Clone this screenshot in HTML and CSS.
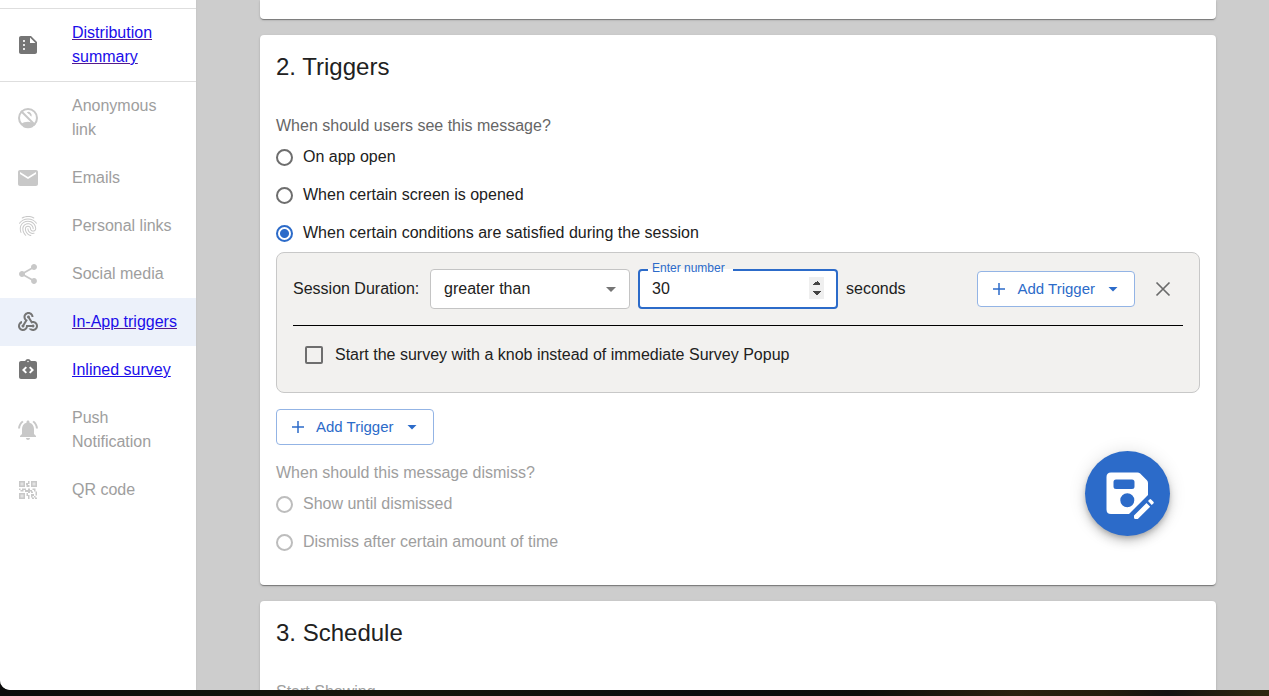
FILE: index.html
```html
<!DOCTYPE html>
<html lang="en">
<head>
<meta charset="utf-8">
<title>In-App triggers</title>
<link rel="stylesheet" href="styles.css">
</head>
<body>
<div class="window">
  <nav class="sidebar" aria-label="Distribution">
    <ul class="nav nav-summary">
      <li class="nav-item">
        <svg class="icon" viewBox="0 0 24 24"><path d="M15 3H5c-1.1 0-1.99.9-1.99 2L3 19c0 1.1.89 2 1.99 2H19c1.1 0 2-.9 2-2V9l-6-6zM8 17c-.55 0-1-.45-1-1s.45-1 1-1 1 .45 1 1-.45 1-1 1zm0-4c-.55 0-1-.45-1-1s.45-1 1-1 1 .45 1 1-.45 1-1 1zm0-4c-.55 0-1-.45-1-1s.45-1 1-1 1 .45 1 1-.45 1-1 1zm6 1V4.5l5.500 5.500H14z"/></svg>
        <a class="visited" href="#summary">Distribution summary</a>
      </li>
    </ul>
    <ul class="nav">
      <li class="nav-item disabled">
        <svg class="icon" viewBox="0 0 24 24"><circle cx="12" cy="12" r="11" fill="none" stroke="none"/><circle cx="12" cy="12" r="9" fill="none" stroke="currentColor" stroke-width="2"/><path d="M5 18C7 16.500 9.400 15.700 12 15.700c1.100 0 2.200.2 3.300.5L19 18.500l-2.500 2.700a10 10 0 0 1-9 0z"/><path d="M5 5l14 14" fill="none" stroke="currentColor" stroke-width="2"/><path d="M10.800 6.200a3.500 3.500 0 0 1 4.600 4.600l-1.500-1.500a1.600 1.600 0 0 0-1.600-1.600z"/></svg>
        <span>Anonymous link</span>
      </li>
      <li class="nav-item disabled">
        <svg class="icon" viewBox="0 0 24 24"><path d="M20 4H4c-1.100 0-1.990.9-1.990 2L2 18c0 1.100.9 2 2 2h16c1.100 0 2-.9 2-2V6c0-1.100-.9-2-2-2zm0 4l-8 5-8-5V6l8 5 8-5v2z"/></svg>
        <span>Emails</span>
      </li>
      <li class="nav-item disabled">
        <svg class="icon" viewBox="0 0 24 24"><path d="M17.81 4.47c-.08 0-.16-.02-.23-.06C15.66 3.42 14 3 12.01 3c-1.98 0-3.86.47-5.57 1.41-.24.13-.54.04-.68-.2-.13-.24-.04-.55.2-.68C7.82 2.52 9.86 2 12.01 2c2.13 0 3.99.47 6.03 1.52.25.13.34.43.21.67-.09.18-.26.28-.44.28zM3.500 9.720c-.1 0-.2-.03-.29-.09-.23-.16-.28-.47-.12-.7.99-1.400 2.250-2.500 3.750-3.270C9.980 4.040 14 4.030 17.150 5.650c1.500.77 2.760 1.860 3.750 3.250.16.22.11.54-.12.7-.23.16-.54.11-.7-.12-.9-1.260-2.040-2.250-3.390-2.940-2.870-1.470-6.540-1.470-9.400.01-1.360.7-2.500 1.700-3.400 2.960-.08.14-.23.21-.39.21zm6.250 12.070c-.13 0-.26-.05-.35-.15-.87-.87-1.340-1.430-2.010-2.640-.69-1.230-1.050-2.730-1.050-4.340 0-2.970 2.540-5.390 5.660-5.390s5.660 2.420 5.660 5.390c0 .28-.22.5-.5.5s-.5-.22-.5-.5c0-2.420-2.090-4.390-4.660-4.390-2.570 0-4.660 1.970-4.660 4.390 0 1.440.32 2.770.93 3.850.64 1.150 1.080 1.640 1.850 2.420.19.2.19.51 0 .71-.11.1-.24.15-.37.15zm7.170-1.850c-1.190 0-2.240-.3-3.100-.89-1.490-1.010-2.380-2.650-2.380-4.390 0-.28.22-.5.5-.5s.5.22.5.5c0 1.410.72 2.740 1.940 3.560.71.48 1.540.71 2.540.71.24 0 .64-.03 1.040-.1.27-.05.53.13.58.41.05.27-.13.53-.41.58-.57.11-1.070.12-1.210.12zM14.910 22c-.04 0-.09-.01-.13-.02-1.590-.44-2.630-1.030-3.720-2.100-1.400-1.390-2.170-3.240-2.170-5.220 0-1.620 1.380-2.940 3.080-2.940 1.700 0 3.080 1.320 3.080 2.940 0 1.070.93 1.940 2.080 1.940s2.080-.87 2.080-1.940c0-3.770-3.250-6.830-7.250-6.830-2.840 0-5.440 1.580-6.610 4.030-.39.81-.59 1.760-.59 2.800 0 .78.07 2.010.67 3.610.1.26-.03.55-.29.64-.26.1-.55-.04-.64-.29-.49-1.310-.73-2.610-.73-3.960 0-1.200.23-2.290.68-3.240 1.330-2.790 4.280-4.600 7.510-4.600 4.550 0 8.250 3.510 8.250 7.830 0 1.620-1.380 2.940-3.080 2.940s-3.080-1.320-3.080-2.940c0-1.070-.93-1.940-2.080-1.940s-2.080.87-2.080 1.940c0 1.710.66 3.310 1.870 4.510.95.94 1.860 1.460 3.270 1.850.27.07.42.35.35.61-.05.23-.26.38-.47.38z"/></svg>
        <span>Personal links</span>
      </li>
      <li class="nav-item disabled">
        <svg class="icon" viewBox="0 0 24 24"><path d="M18 16.080c-.76 0-1.440.3-1.960.77L8.910 12.700c.05-.23.09-.46.09-.7s-.04-.47-.09-.7l7.050-4.110c.54.5 1.250.81 2.040.81 1.660 0 3-1.340 3-3s-1.340-3-3-3-3 1.340-3 3c0 .24.04.47.09.7L8.040 9.810C7.500 9.310 6.790 9 6 9c-1.660 0-3 1.340-3 3s1.340 3 3 3c.79 0 1.500-.31 2.040-.81l7.120 4.160c-.05.21-.08.43-.08.65 0 1.610 1.310 2.920 2.920 2.920s2.920-1.310 2.920-2.920-1.310-2.920-2.920-2.920z"/></svg>
        <span>Social media</span>
      </li>
      <li class="nav-item selected">
        <svg class="icon" viewBox="0 0 24 24"><path d="M10 15h5.880c.27-.31.67-.5 1.120-.5.83 0 1.500.67 1.500 1.500s-.67 1.500-1.500 1.500c-.44 0-.84-.19-1.120-.5H11.900c-.46 2.280-2.480 4-4.900 4-2.760 0-5-2.240-5-5 0-2.420 1.720-4.440 4-4.900v2.070c-1.160.41-2 1.530-2 2.830 0 1.650 1.350 3 3 3s3-1.350 3-3v-1zm2.500-11c1.650 0 3 1.350 3 3h2c0-2.760-2.240-5-5-5s-5 2.240-5 5c0 1.430.6 2.710 1.550 3.620l-2.350 3.900c-.68.14-1.200.75-1.200 1.480 0 .83.67 1.500 1.500 1.500s1.500-.67 1.500-1.500c0-.16-.02-.31-.07-.45l3.380-5.630C10.490 9.610 9.500 8.420 9.500 7c0-1.650 1.350-3 3-3zm4.500 9c-.64 0-1.230.2-1.720.54l-3.050-5.070C11.530 8.350 11 7.740 11 7c0-.83.67-1.500 1.500-1.500S14 6.170 14 7c0 .15-.02.29-.06.43l2.190 3.650c.28-.05.57-.08.87-.08 2.760 0 5 2.240 5 5s-2.240 5-5 5c-1.850 0-3.470-1.010-4.330-2.500h2.670c.48.32 1.050.5 1.660.5 1.650 0 3-1.350 3-3s-1.350-3-3-3z"/></svg>
        <a class="visited" href="#in-app" aria-current="page">In-App triggers</a>
      </li>
      <li class="nav-item">
        <svg class="icon" viewBox="0 0 24 24"><path fill-rule="evenodd" d="M19 3h-4.180C14.400 1.840 13.300 1 12 1s-2.400.84-2.820 2H5c-1.100 0-2 .9-2 2v14c0 1.100.9 2 2 2h14c1.100 0 2-.9 2-2V5c0-1.100-.9-2-2-2zM11 14.170l-1.410 1.420L6 12l3.590-3.590L11 9.830 8.830 12 11 14.170zm1-9.920a.75.75 0 1 1 0-1.500.75.75 0 0 1 0 1.500zm2.410 11.340L13 14.170 15.170 12 13 9.830l1.410-1.420L18 12l-3.590 3.590z"/></svg>
        <a href="#inlined">Inlined survey</a>
      </li>
      <li class="nav-item disabled">
        <svg class="icon" viewBox="0 0 24 24"><path d="M7.580 4.080L6.150 2.650C3.750 4.480 2.170 7.300 2.030 10.500h2c.15-2.650 1.510-4.970 3.550-6.420zm12.390 6.420h2c-.15-3.200-1.730-6.020-4.120-7.850l-1.420 1.430c2.020 1.450 3.390 3.770 3.540 6.420zM18 11c0-3.070-1.640-5.640-4.500-6.320V4c0-.83-.67-1.500-1.500-1.500s-1.500.67-1.500 1.500v.68C7.630 5.360 6 7.920 6 11v5l-2 2v1h16v-1l-2-2v-5zm-6 11c1.100 0 2-.9 2-2h-4c0 1.100.9 2 2 2z"/></svg>
        <span>Push Notification</span>
      </li>
      <li class="nav-item disabled">
        <svg class="icon" viewBox="0 0 24 24"><g fill="currentColor" fill-opacity=".5" stroke="currentColor" stroke-width="1.500"><path d="M3.750 3.750h4.500v4.500h-4.500zM15.750 3.750h4.500v4.500h-4.500zM3.750 15.750h4.500v4.500h-4.500z"/></g><path d="M12 3h1.500v3H12zM10 5h2v2h-2zM10.500 7H13.500V9h-3zM3 10.500h1.500V12H3zM4.500 12H6v1.500H4.500zM6 10.500h4V12H7.500v1.500H6zM9 12h3v2H9zM12 10.500h2V12h2v1.500h-2V15h-2zM16.500 10.500h3V12h-3zM18 12h1.500v1.500H18zM19.500 13.500H21v4h-1.500zM15 13.500h2V15h-2zM10.500 15H12v3h-1.500zM12 17h1.500v4H12zM15 16h3v2h-1.500v1.500H15zM16 19.500h2V21h-2zM18 18h1.500v1.500H21V21h-2v-1.500h-1z"/></svg>
        <span>QR code</span>
      </li>
    </ul>
  </nav>

  <main class="content">
    <section class="card card-previous" aria-label="Previous step"></section>

    <section class="card">
      <h2>2. Triggers</h2>
      <fieldset class="group">
        <legend>When should users see this message?</legend>
        <label class="choice"><input type="radio" name="trigger"><span>On app open</span></label>
        <label class="choice"><input type="radio" name="trigger"><span>When certain screen is opened</span></label>
        <label class="choice"><input type="radio" name="trigger" checked><span>When certain conditions are satisfied during the session</span></label>
      </fieldset>

      <div class="conditions">
        <div class="condition-row">
          <label class="condition-name" for="comparison">Session Duration:</label>
          <div class="field">
            <select id="comparison"><option>greater than</option><option>less than</option></select>
            <svg class="icon caret" viewBox="0 0 24 24"><path d="M7 10l5 5 5-5z"/></svg>
          </div>
          <div class="field field-active">
            <label class="float-label" for="seconds">Enter number</label>
            <input id="seconds" type="number" value="30">
          </div>
          <span>seconds</span>
          <div class="row-actions">
            <button class="button" type="button">
              <svg viewBox="0 0 20 20"><path d="M4 10h12M10 4v12" fill="none" stroke="currentColor" stroke-width="1.500"/></svg>
              <span>Add Trigger</span>
              <svg viewBox="0 0 20 20"><path d="M5.500 8h9L10 12.500z"/></svg>
            </button>
            <button class="icon-button" type="button" aria-label="Remove trigger">
              <svg class="icon" viewBox="0 0 24 24"><path d="M5.500 5.500l13 13M18.500 5.500l-13 13" fill="none" stroke="currentColor" stroke-width="1.700"/></svg>
            </button>
          </div>
        </div>
        <hr>
        <label class="choice knob"><input type="checkbox"><span>Start the survey with a knob instead of immediate Survey Popup</span></label>
      </div>

      <button class="button" type="button">
        <svg viewBox="0 0 20 20"><path d="M4 10h12M10 4v12" fill="none" stroke="currentColor" stroke-width="1.500"/></svg>
        <span>Add Trigger</span>
        <svg viewBox="0 0 20 20"><path d="M5.500 8h9L10 12.500z"/></svg>
      </button>

      <fieldset class="group group-dismiss" disabled>
        <legend>When should this message dismiss?</legend>
        <label class="choice"><input type="radio" name="dismiss"><span>Show until dismissed</span></label>
        <label class="choice"><input type="radio" name="dismiss"><span>Dismiss after certain amount of time</span></label>
      </fieldset>
    </section>

    <section class="card">
      <h2>3. Schedule</h2>
      <fieldset class="group" disabled>
        <legend>Start Showing</legend>
      </fieldset>
    </section>
  </main>

  <button class="fab" type="button" aria-label="Save changes">
    <svg viewBox="0 0 85 85"><path fill-rule="evenodd" d="M26 21.500H52.500Q54 21.500 55.200 22.600L61.900 29.300Q63 30.400 63 32V44L44 63H26Q21.500 63 21.500 58.500V26Q21.500 21.500 26 21.500zM31 28.500Q28.500 28.500 28.500 31V35.500Q28.500 38 31 38H47Q49.500 38 49.500 35.500V31Q49.500 28.500 47 28.500zM42.300 42.300a7 7 0 1 0 0 14 7 7 0 0 0 0-14z"/><path d="M49 64.500L61.500 52 65.200 55.700 52.800 68H50.500Q49 68 49 66.500zM63 50l1.500-1.500q.8-.8 1.600 0l2.300 2.300q.8.8 0 1.600L66.700 54z"/></svg>
  </button>
</div>
<div class="desktop"></div>
</body>
</html>
```
FILE: styles.css
```css
* {
  box-sizing: border-box;
}

body {
  margin: 0;
  height: 100vh;
  display: flex;
  flex-direction: column;
  overflow: hidden;
  background: #0b0c0b;
  color: #212121;
  font-family: "Liberation Sans", Arial, sans-serif;
  font-size: 16px;
  line-height: 24px;
}

input,
select,
button {
  margin: 0;
  font: inherit;
  color: inherit;
}

.window {
  position: relative;
  flex: 1;
  min-height: 0;
  display: flex;
  overflow: hidden;
  border-bottom-left-radius: 10px;
  background: #cdcdcd;
}

.desktop {
  height: 6px;
  background: linear-gradient(90deg, #0b0c0b 0%, #15170b 30%, #0b0c0e 55%, #0d0e0b 68%, #2b210f 80%, #241c0c 87%, #141111 92%, #30280f 100%);
}

.icon {
  flex: none;
  width: 24px;
  height: 24px;
  fill: currentColor;
}

/* Sidebar */

.sidebar {
  flex: none;
  width: 196px;
  padding-top: 8px;
  background: #fff;
  box-shadow: 0 0 2px rgba(0, 0, 0, 0.08);
}

.nav {
  margin: 0;
  padding: 0;
  list-style: none;
}

.nav-summary {
  border-top: 1px solid #dedede;
  border-bottom: 1px solid #dedede;
}

.nav-item {
  display: flex;
  align-items: center;
  gap: 32px;
  padding: 12px 16px;
  color: #757575;
}

.nav-item a {
  color: #1a0dea;
}

.nav-item .visited {
  text-decoration-color: #551a8b;
}

.selected {
  background: #ecf1fa;
}

.disabled {
  color: #c8c8c8;
}

.disabled span {
  color: #9e9e9e;
}

/* Cards */

.content {
  flex: 1;
  min-width: 0;
  display: flex;
  flex-direction: column;
  gap: 16px;
  padding: 0 53px 0 64px;
}

.card {
  flex: none;
  padding: 16px 16px 24px;
  border-radius: 4px;
  background: #fff;
  box-shadow: 0 2px 1px -1px rgba(0, 0, 0, 0.2), 0 1px 1px rgba(0, 0, 0, 0.2), 0 1px 3px rgba(0, 0, 0, 0.12);
}

.card-previous {
  padding: 0 0 19px;
  border-radius: 0 0 4px 4px;
}

h2 {
  margin: 0 0 31px;
  font-size: 24px;
  font-weight: 400;
  line-height: 32px;
}

.group {
  min-width: 0;
  margin: 0;
  padding: 0;
  border: 0;
}

.group legend {
  padding: 0;
  color: #666;
}

.group:disabled,
.group:disabled legend {
  color: #9e9e9e;
}

.group-dismiss {
  margin-top: 16px;
}

.choice {
  display: flex;
  align-items: center;
  gap: 10px;
  height: 38px;
}

.choice input {
  appearance: none;
  flex: none;
  width: 17px;
  height: 17px;
  border: 2px solid #6e6e6e;
  border-radius: 50%;
}

.choice input:checked {
  border-color: #2c6bc9;
  background: radial-gradient(circle, #2c6bc9 4px, transparent 5px);
}

.choice input:disabled {
  border-color: #bdbdbd;
}

.conditions {
  margin-bottom: 16px;
  padding: 16px;
  border: 1px solid #c8c8c8;
  border-radius: 8px;
  background: #f2f1ef;
}

.condition-row {
  display: flex;
  align-items: center;
  gap: 8px;
}

.condition-name {
  min-width: 129px;
}

.conditions hr {
  margin: 16px 0 8px;
  border: 0;
  border-top: 1px solid #000;
}

.knob {
  height: 42px;
  gap: 12px;
  padding-left: 12px;
}

.choice input[type="checkbox"] {
  width: 18px;
  height: 18px;
  border-radius: 2px;
}

.field {
  position: relative;
  display: flex;
  align-items: center;
  width: 200px;
  height: 40px;
  border: 1px solid #c4c4c4;
  border-radius: 4px;
  background: #fff;
}

.field select {
  appearance: none;
  width: 100%;
  height: 100%;
  padding: 0 32px 0 13px;
  border: 0;
  background: transparent;
}

.caret {
  position: absolute;
  right: 6px;
  color: #757575;
  pointer-events: none;
}

.field-active {
  border: 2px solid #2c6bc9;
}

.field-active input {
  width: 100%;
  height: 24px;
  margin: 0 12px;
  padding: 0;
  border: 0;
  outline: 0;
  background: transparent;
}

.field-active input::-webkit-inner-spin-button {
  appearance: none;
  width: 15px;
  height: 22px;
  margin: 0;
  opacity: 1;
  background:
    conic-gradient(from 135deg at 50% 0, #444 90deg, transparent 0) 50% 4px / 8px 4px no-repeat,
    conic-gradient(from -45deg at 50% 100%, #444 90deg, transparent 0) 50% 14px / 8px 4px no-repeat,
    #efefef;
}

.float-label {
  position: absolute;
  top: -9px;
  left: 8px;
  height: 14px;
  padding: 0 8px 0 4px;
  background: linear-gradient(transparent 50%, #fff 50%);
  color: #2c6bc9;
  font-size: 12px;
  line-height: 12px;
}

.row-actions {
  display: flex;
  align-items: center;
  gap: 8px;
  margin-left: auto;
}

.button {
  display: flex;
  align-items: center;
  gap: 8px;
  height: 36px;
  padding: 0 11px;
  border: 1px solid #93b4e5;
  border-radius: 4px;
  background: #fff;
  color: #2c6bc9;
  font-size: 15px;
}

.button svg {
  width: 20px;
  height: 20px;
  fill: currentColor;
}

.icon-button {
  display: grid;
  place-items: center;
  width: 40px;
  height: 40px;
  padding: 0;
  border: 0;
  background: none;
  color: #6b6b6b;
}

.fab {
  position: absolute;
  right: 99px;
  bottom: 154px;
  width: 85px;
  height: 85px;
  padding: 0;
  border: 0;
  border-radius: 50%;
  background: #2c6bc9;
  color: #fff;
  box-shadow: 0 3px 5px -1px rgba(0, 0, 0, 0.2), 0 6px 10px rgba(0, 0, 0, 0.14), 0 1px 18px rgba(0, 0, 0, 0.12);
}

.fab svg {
  display: block;
  fill: currentColor;
}
```
